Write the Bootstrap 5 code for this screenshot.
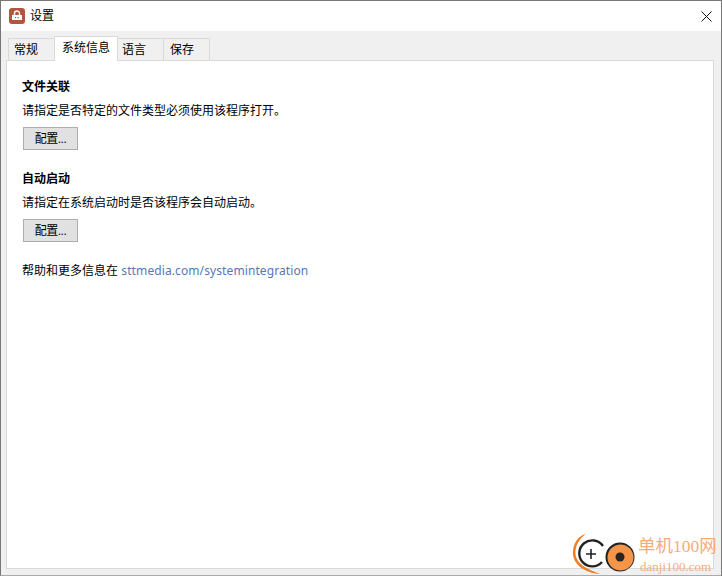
<!DOCTYPE html>
<html lang="zh-CN">
<head>
  <meta charset="UTF-8">
  <title>设置</title>
  <link href="https://cdn.jsdelivr.net/npm/bootstrap@5.3.3/dist/css/bootstrap.min.css" rel="stylesheet">
  <style>
    html, body { height: 100%; overflow: hidden; }
    body { font-family: "Liberation Sans", "Noto Sans CJK SC", sans-serif; font-size: 12px; color: #000; background: #f0f0f0; }
    .win-frame { position: relative; height: 576px; border: 1px solid #777; border-bottom-color: #aaa; display: flex; flex-direction: column; }
    .win-title { height: 30px; background: #fff; flex: none; padding-left: 8px; font-size: 12px; }
    .win-title svg.app-ico { margin-right: 5px; }
    .win-close { margin-left: auto; margin-right: 9px; margin-top: 1px; }
    .win-body { flex: 1; padding: 6px 7px 0 5px; display: flex; flex-direction: column; min-height: 0; }
    .tab-strip { display: flex; align-items: flex-end; height: 23px; padding-left: 2px; flex: none; position: relative; z-index: 1; }
    .tab-item { height: 22px; border: 1px solid #d9d9d9; border-bottom: 0; background: #f0f0f0; padding: 3px 5px 0 5px; line-height: 16px; margin-left: -1px; }
    .tab-item:first-child { margin-left: 0; width: 47px; }
    .tab-on { height: 25px; background: #fff; margin-bottom: -1px; margin-left: -1px; margin-right: -1px; padding: 3px 7px 0 7px; position: relative; z-index: 2; width: 64px; white-space: nowrap; }
    .tab-lang { width: 48px; }
    .tab-save { width: 47px; padding-left: 6px; }
    .tab-pane-box { flex: 1; background: #fff; border: 1px solid #d9d9d9; padding: 18px 15px; margin-bottom: 6px; }
    .sect-title { font-weight: 700; line-height: 16px; margin-bottom: 8px; }
    .sect-text { line-height: 16px; margin-bottom: 8px; }
    .cfg-btn { width: 55px; height: 23px; margin-left: 1px; padding: 1px 0 0; font-size: 12px; line-height: 20px; letter-spacing: -.5px; color: #000; background: #e1e1e1; border: 1px solid #adadad; border-radius: 0; display: block; }
    .sect-gap { margin-bottom: 21px; }
    .help-line { line-height: 16px; margin-top: 21px; }
    .help-line a { font-family: "Noto Sans", sans-serif; letter-spacing: .1px; color: #5477bb; text-decoration: none; }
    .wm-box { position: absolute; right: 0; bottom: 0; width: 150px; height: 56px; }
    .wm-cn { position: absolute; left: 67px; top: 17px; font-family: "Liberation Serif", "Noto Sans CJK SC", serif; font-size: 17.5px; line-height: 20px; color: #f8ab78; white-space: nowrap; }
    .wm-en { position: absolute; left: 69px; top: 41px; font-family: "Liberation Serif", serif; font-size: 13px; line-height: 14px; color: #f8ab78; white-space: nowrap; }
    .wm-logo { position: absolute; left: 0; top: 10px; }
  </style>
</head>
<body>
  <div class="win-frame">
    <div class="win-title d-flex align-items-center">
      <svg class="app-ico" width="16" height="16" viewBox="0 0 16 16">
        <rect width="16" height="16" rx="3" fill="#b5533c"/>
        <path d="M5.5 7V5.5a2.5 2.5 0 0 1 5 0V7" fill="none" stroke="#fff" stroke-width="1.4"/>
        <rect x="3" y="7" width="10" height="5" fill="#fff"/>
        <rect x="6" y="9" width="1.2" height="1.2" fill="#b5533c"/>
        <rect x="8.6" y="9" width="1.2" height="1.2" fill="#b5533c"/>
      </svg>
      <span>设置</span>
      <svg class="win-close" width="11" height="11" viewBox="0 0 11 11"><path d="M.5.5l10 10M10.5.5l-10 10" stroke="#111" stroke-width="1" fill="none"/></svg>
    </div>
    <div class="win-body">
      <div class="tab-strip">
        <div class="tab-item">常规</div>
        <div class="tab-item tab-on">系统信息</div>
        <div class="tab-item tab-lang">语言</div>
        <div class="tab-item tab-save">保存</div>
      </div>
      <div class="tab-pane-box">
        <div class="sect-gap">
          <div class="sect-title">文件关联</div>
          <div class="sect-text">请指定是否特定的文件类型必须使用该程序打开。</div>
          <button type="button" class="btn cfg-btn">配置...</button>
        </div>
        <div>
          <div class="sect-title">自动启动</div>
          <div class="sect-text">请指定在系统启动时是否该程序会自动启动。</div>
          <button type="button" class="btn cfg-btn">配置...</button>
        </div>
        <div class="help-line">帮助和更多信息在 <a href="#">sttmedia.com/systemintegration</a></div>
      </div>
    </div>
    <div class="wm-box">
      <svg class="wm-logo" width="66" height="46" viewBox="0 0 66 46">
        <path d="M15 5C6 7 1.500 16 2 25c.5 10 11 19 27 20C19 41 5.500 36 4.500 25 4 16 9 9 15 5z" fill="#f08028"/>
        <path d="M32 17A13 13 0 1 0 31 33" fill="none" stroke="#222" stroke-width="2.400"/>
        <path d="M20 20v10M15 25h10" stroke="#222" stroke-width="1.600"/>
        <circle cx="49" cy="28" r="14.500" fill="#222"/>
        <circle cx="49.500" cy="28.500" r="13" fill="#f5954a"/>
        <circle cx="49" cy="28" r="4.500" fill="#2a2320"/>
      </svg>
      <div class="wm-cn">单机100网</div>
      <div class="wm-en">danji100.com</div>
    </div>
  </div>
</body>
</html>
